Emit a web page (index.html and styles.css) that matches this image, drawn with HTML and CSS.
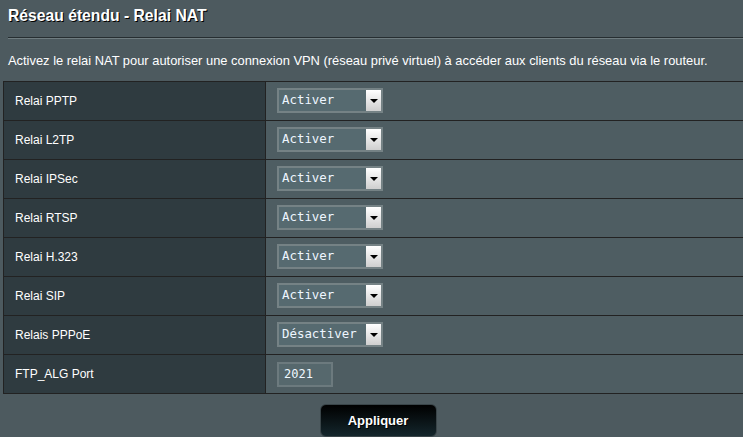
FILE: index.html
```html
<!DOCTYPE html>
<html>
<head>
<meta charset="utf-8">
<link rel="stylesheet" href="styles.css">
</head>
<body>
<div class="page">
  <h1 class="title">Réseau étendu - Relai NAT</h1>
  <div class="rule"></div>
  <p class="desc">Activez le relai NAT pour autoriser une connexion VPN (réseau privé virtuel) à accéder aux clients du réseau via le routeur.</p>
  <table class="form">
    <tr><th>Relai PPTP</th><td><span class="sel"><span class="sel-text">Activer</span><span class="arrow"></span></span></td></tr>
    <tr><th>Relai L2TP</th><td><span class="sel"><span class="sel-text">Activer</span><span class="arrow"></span></span></td></tr>
    <tr><th>Relai IPSec</th><td><span class="sel"><span class="sel-text">Activer</span><span class="arrow"></span></span></td></tr>
    <tr><th>Relai RTSP</th><td><span class="sel"><span class="sel-text">Activer</span><span class="arrow"></span></span></td></tr>
    <tr><th>Relai H.323</th><td><span class="sel"><span class="sel-text">Activer</span><span class="arrow"></span></span></td></tr>
    <tr><th>Relai SIP</th><td><span class="sel"><span class="sel-text">Activer</span><span class="arrow"></span></span></td></tr>
    <tr><th>Relais PPPoE</th><td><span class="sel"><span class="sel-text">Désactiver</span><span class="arrow"></span></span></td></tr>
    <tr><th>FTP_ALG Port</th><td><span class="inp">2021</span></td></tr>
  </table>
  <div class="actions"><button class="apply">Appliquer</button></div>
</div>
</body>
</html>
```
FILE: styles.css
```css
html, body {
  margin: 0;
  padding: 0;
  background: #4d5a5f;
  overflow: hidden;
}
.page {
  font-family: "Liberation Sans", Arial, sans-serif;
  color: #ffffff;
  width: 743px;
  height: 437px;
}
.title {
  margin: 0;
  padding: 6px 0 0 8px;
  height: 23px;
  font-size: 15.7px;
  font-weight: bold;
  line-height: 20px;
  text-shadow: 1px 1px 0 #000;
}
.rule {
  margin-left: 8px;
  height: 1px;
  background: #262e31;
  border-bottom: 1px solid #6f7c80;
  margin-top: 8px;
}
.desc {
  margin: 0;
  padding: 14px 0 0 8px;
  height: 28px;
  font-size: 12.9px;
  line-height: 16px;
}
.form {
  margin-left: 3px;
  width: 740px;
  border-collapse: collapse;
  border: 1px solid #222;
  border-right: none;
}
.form th, .form td {
  height: 38px;
  border-top: 1px solid #222;
  border-bottom: 1px solid #222;
  padding: 0;
}
.form th {
  width: 262px;
  background: #2f3b40;
  border-right: 1px solid #222;
  text-align: left;
  font-weight: normal;
  font-size: 12px;
  padding-left: 11px;
  box-sizing: border-box;
}
.form td {
  background: #4e5d62;
  padding-left: 11px;
}
.sel {
  display: inline-flex;
  align-items: center;
  width: 106px;
  height: 25px;
  box-sizing: border-box;
  border: 2px solid #758285;
  background: #566a70;
  vertical-align: middle;
  position: relative;
  top: -1px;
}
.sel-text {
  flex: 1;
  font-family: "DejaVu Sans Mono", "Liberation Mono", monospace;
  font-size: 12.4px;
  color: #eef6ff;
  padding-left: 3px;
  padding-bottom: 2px;
}
.arrow {
  width: 15px;
  height: 21px;
  background: linear-gradient(#ffffff, #cfcfcf);
  position: relative;
}
.arrow::after {
  content: "";
  position: absolute;
  left: 4px;
  top: 9px;
  border-left: 4px solid transparent;
  border-right: 4px solid transparent;
  border-top: 4px solid #000;
}
.inp {
  display: inline-block;
  width: 56px;
  height: 25px;
  box-sizing: border-box;
  border: 2px solid #6c7a7e;
  background: #56686d;
  font-family: "DejaVu Sans Mono", "Liberation Mono", monospace;
  font-size: 12px;
  line-height: 20px;
  padding-left: 5px;
  color: #f0f8ff;
  vertical-align: middle;
}
.actions {
  text-align: center;
  padding-top: 10px;
  padding-left: 13px;
}
.apply {
  width: 117px;
  height: 33px;
  border: 1px solid #3a4549;
  border-radius: 6px;
  background: linear-gradient(#000000, #14262c);
  color: #fff;
  font-family: "Liberation Sans", Arial, sans-serif;
  font-weight: bold;
  font-size: 13px;
  text-shadow: 1px 1px 0 #000;
}
```
